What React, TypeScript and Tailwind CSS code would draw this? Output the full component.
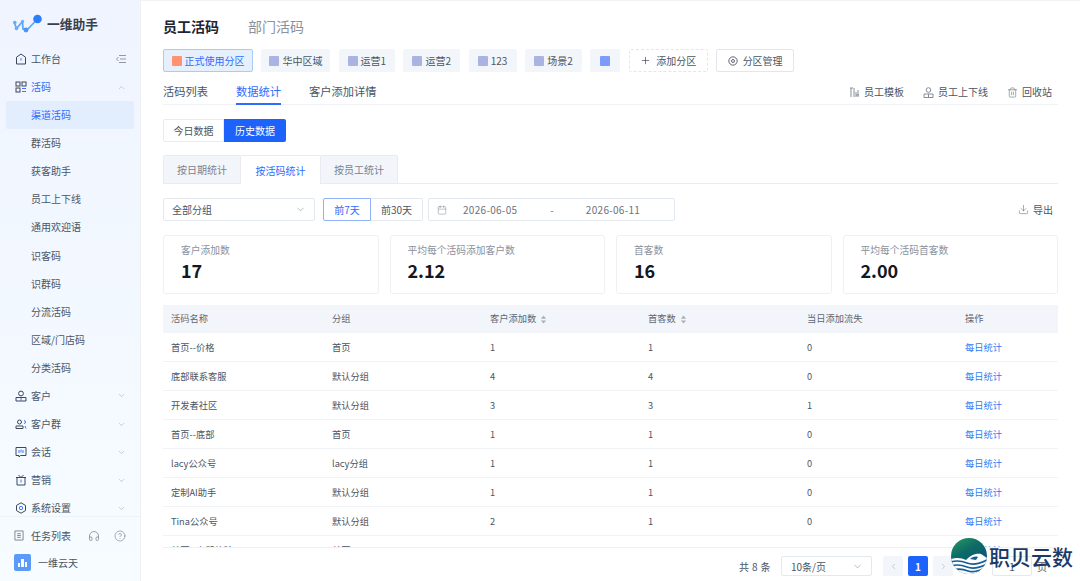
import { Calendar, ChevronDown, ChevronLeft, ChevronRight, ChevronUp, CircleHelp, Download, Headphones, Plus, Trash2 } from "lucide-react";

const menuTop = [
    { name: "客户", icon: "user" },
    { name: "客户群", icon: "users" },
    { name: "会话", icon: "chat" },
    { name: "营销", icon: "gift" },
    { name: "系统设置", icon: "gear" },
];

const subMenu = ["渠道活码", "群活码", "获客助手", "员工上下线", "通用欢迎语", "识客码", "识群码", "分流活码", "区域/门店码", "分类活码"];

const chips = [
    { name: "华中区域", w: "w-[69px]" },
    { name: "运营1", w: "w-[56px]" },
    { name: "运营2", w: "w-[57px]" },
    { name: "123", w: "w-[48px]" },
    { name: "场景2", w: "w-[57px]" },
];

const stats = [
    { label: "客户添加数", value: "17" },
    { label: "平均每个活码添加客户数", value: "2.12" },
    { label: "首客数", value: "16" },
    { label: "平均每个活码首客数", value: "2.00" },
];

const rows = [
    { name: "首页--价格", group: "首页", add: "1", first: "1", lost: "0" },
    { name: "底部联系客服", group: "默认分组", add: "4", first: "4", lost: "0" },
    { name: "开发者社区", group: "默认分组", add: "3", first: "3", lost: "1" },
    { name: "首页--底部", group: "首页", add: "1", first: "1", lost: "0" },
    { name: "lacy公众号", group: "lacy分组", add: "1", first: "1", lost: "0" },
    { name: "定制AI助手", group: "默认分组", add: "1", first: "1", lost: "0" },
    { name: "Tina公众号", group: "默认分组", add: "2", first: "1", lost: "0" },
    { name: "首页--立即体验", group: "首页", add: "1", first: "1", lost: "0" },
];

function MenuIcon({ type }: { type: string }) {
    const dark = "#3f4757";
    const blue = "#3b78ff";
    return (
        <svg viewBox="0 0 12 12" className="w-[12px] h-[12px] shrink-0" fill="none" stroke={dark} strokeWidth="1">
            {type === "home" && (<><path d="M1.500 4.200 6 1l4.500 3.200v6.800h-9z" /><path d="M6 5v2.600" stroke={blue} /></>)}
            {type === "grid" && (<><rect x="1" y="1" width="4" height="4" /><rect x="7" y="1" width="4" height="4" /><rect x="1" y="7" width="4" height="4" /><path d="M7 7.500h4M7 10.500h4" stroke={blue} /></>)}
            {type === "user" && (<><circle cx="6" cy="3.500" r="2.400" /><path d="M1 11V7.500h10V11z" /><path d="M6 8v3" stroke={blue} /></>)}
            {type === "users" && (<><circle cx="4.500" cy="4" r="2" /><path d="M1 10.500V8h7v2.500z" /><path d="M9 2.500a1.500 1.500 0 0 1 0 3M10 8l1 2.500" stroke={blue} /></>)}
            {type === "chat" && (<><path d="M1 1.500h10v8H5.500L4 11V9.500H1z" /><path d="M4 4v3M6 3.500v3M8 4v3" stroke={blue} /></>)}
            {type === "gift" && (<><path d="M1 3.500h10M2 3.500v7.500h8V3.500M3.500 1 6 3.500 8.500 1" /><path d="M6 5.500v3" stroke={blue} /></>)}
            {type === "gear" && (<><path d="m6 .8 4.500 2.600v5.200L6 11.200 1.500 8.600V3.400z" /><circle cx="6" cy="6" r="1.700" stroke={blue} /></>)}
        </svg>
    );
}

function Logo() {
    return (
        <svg viewBox="0 0 30 20" className="w-[30px] h-[20px]" fill="none" strokeLinecap="round">
            <path d="M1.500 9 3.500 14.500 9.500 7.500 10 15 14 16 24 5.500" stroke="#63a8f7" strokeWidth="1.800" />
            <circle cx="1.800" cy="8.500" r="1.800" fill="#5fb0f8" />
            <circle cx="3.500" cy="14.500" r="1.800" fill="#5fb0f8" />
            <circle cx="9.500" cy="7.500" r="1.600" fill="#5fb0f8" />
            <circle cx="13" cy="16" r="2.400" fill="#4a95f5" />
            <circle cx="24.500" cy="5" r="4.300" fill="#2d7ff9" />
        </svg>
    );
}

function SortIcon() {
    return (
        <svg viewBox="0 0 8 10" className="w-[7px] h-[9px]" fill="#a9b0bc">
            <path d="M4 .5 7 4H1zM4 9.500 1 6h6z" />
        </svg>
    );
}

function Watermark() {
    return (
        <div className="absolute left-[951px] top-[538px] flex items-center gap-[2px]">
            <svg viewBox="0 0 36 36" className="w-[36px] h-[36px]">
                <defs>
                    <linearGradient id="globe" x1="0" y1="0" x2="0.600" y2="1">
                        <stop offset="0" stopColor="#2a9a63" />
                        <stop offset="0.450" stopColor="#0d6a66" />
                        <stop offset="1" stopColor="#0a4f86" />
                    </linearGradient>
                    <clipPath id="ball">
                        <circle cx="18" cy="18" r="18" />
                    </clipPath>
                </defs>
                <circle cx="18" cy="18" r="18" fill="url(#globe)" />
                <g clipPath="url(#ball)">
                    <path d="M0 21c6-2 11-1 15 1 4-4 9-7 15-6l6 4v16H0z" fill="#fff" />
                    <path d="M0 24c6-2 11-1 16 1s12 1 20-3" stroke="#135f96" strokeWidth="1.700" fill="none" />
                    <path d="M0 28c6-2 11-1 16 1s12 1 20-3" stroke="#135f96" strokeWidth="1.700" fill="none" />
                    <path d="M3 32c5-2 9-1 14 1s10 0 15-2" stroke="#135f96" strokeWidth="1.700" fill="none" />
                    <path d="M19 21c2-2 5-3 8-2l-2 3z" fill="#135f96" />
                </g>
            </svg>
            <span className="text-[21px] leading-none font-medium text-[#1b3a68]">职贝云数</span>
        </div>
    );
}

export default function App() {
    return (
        <div className="relative w-[1080px] h-[581px] flex overflow-hidden bg-white text-[#4b5563] font-['Noto_Sans_CJK_SC','Noto_Sans',sans-serif]">

            {/* sidebar */}
            <aside className="w-[141px] shrink-0 h-full flex flex-col border-r border-[#eef0f4] bg-gradient-to-b from-[#eff4ff] to-[#f6fcff]">
                <div className="h-[45px] shrink-0 flex items-center pl-[13px] gap-[4px] pt-[2px]">
                    <Logo />
                    <span className="text-[12.750px] font-bold text-[#39404d]">一维助手</span>
                </div>

                <nav className="flex-1 overflow-hidden px-[6px] text-[10px] leading-[28px]">
                    <div className="h-[28px] flex items-center pl-[9px] pr-[8px] gap-[4px]">
                        <MenuIcon type="home" />
                        <span className="flex-1">工作台</span>
                        <svg viewBox="0 0 10 8" className="w-[10px] h-[8px]" fill="none" stroke="#7a828f" strokeWidth="0.800">
                            <path d="M3 .5h7M4 4h6M3 7.500h7M2.500 2 .5 4l2 2" />
                        </svg>
                    </div>
                    <div className="h-[28px] flex items-center pl-[9px] pr-[8px] gap-[4px] text-[#2e6bff]">
                        <MenuIcon type="grid" />
                        <span className="flex-1">活码</span>
                        <ChevronUp className="w-[9px] h-[9px] text-[#b7bcc6]" />
                    </div>
                    {subMenu.map((item, i) => (
                        <div key={item} className={`h-[28.100px] pl-[25px] flex items-center rounded-[2px] ${i === 0 ? "bg-[#e2eefe] text-[#2e6bff]" : ""}`}>
                            {item}
                        </div>
                    ))}
                    {menuTop.map((item) => (
                        <div key={item.name} className="h-[28.100px] flex items-center pl-[9px] pr-[8px] gap-[4px]">
                            <MenuIcon type={item.icon} />
                            <span className="flex-1">{item.name}</span>
                            <ChevronDown className="w-[9px] h-[9px] text-[#b7bcc6]" />
                        </div>
                    ))}
                </nav>

                <div className="h-[65px] shrink-0 border-t border-[#eef2f7] px-[14px] text-[10px]">
                    <div className="h-[37px] flex items-center gap-[6px]">
                        <svg viewBox="0 0 11 12" className="w-[10px] h-[11px]" fill="none" stroke="#6b7280" strokeWidth="0.900">
                            <path d="M1 1h9v10H1zM3.500 4h4M3.500 6h4M3.500 8h4" />
                        </svg>
                        <span className="flex-1 pl-[1px]">任务列表</span>
                        <Headphones className="w-[12px] h-[12px] text-[#7b8290] mr-[8px]" strokeWidth={1.500} />
                        <CircleHelp className="w-[12px] h-[12px] text-[#7b8290]" strokeWidth={1.300} />
                    </div>
                    <div className="flex items-center gap-[7px]">
                        <div className="w-[17px] h-[17px] rounded-[2px] bg-[#5b9af8] flex items-end justify-center gap-[1px] pb-[4px]">
                            <span className="w-[2px] h-[4px] bg-white" />
                            <span className="w-[3px] h-[8px] bg-white" />
                            <span className="w-[2px] h-[5px] bg-white" />
                        </div>
                        <span>一维云天</span>
                    </div>
                </div>
            </aside>

            {/* main */}
            <main className="flex-1 min-w-0 h-full flex flex-col border-t border-[#f1f2f4]">
                <div className="flex-1 overflow-hidden pl-[22px] pr-[22px] pt-[15px]">

                    <div className="flex items-center gap-[29px] h-[20px]">
                        <span className="text-[14px] font-bold text-[#1f2430]">员工活码</span>
                        <span className="text-[14px] text-[#8b919c]">部门活码</span>
                    </div>

                    <div className="flex items-center gap-[8.400px] mt-[13px] h-[23px] text-[10px]">
                        <div className="w-[90px] h-full flex items-center justify-center gap-[3px] rounded-[2px] border border-[#a9cbf8] bg-[#e6f0fd] text-[#2e6bff]">
                            <span className="w-[10px] h-[10px] rounded-[1px] bg-[#ff9270]" />
                            正式使用分区
                        </div>
                        {chips.map((c) => (
                            <div key={c.name} className={`${c.w} h-full flex items-center justify-center gap-[3px] rounded-[2px] bg-[#f2f5fa] text-[#4b5563]`}>
                                <span className="w-[10px] h-[10px] rounded-[1px] bg-[#a9b4e2]" />
                                {c.name}
                            </div>
                        ))}
                        <div className="w-[30px] h-full flex items-center justify-center rounded-[2px] bg-[#f2f5fa]">
                            <span className="w-[10px] h-[10px] rounded-[1px] bg-[#7d9bfb]" />
                        </div>
                        <div className="w-[79px] h-full flex items-center justify-center gap-[5px] rounded-[2px] border border-dashed border-[#e3e6eb]">
                            <Plus className="w-[11px] h-[11px] text-[#3f4757]" strokeWidth={1.500} />
                            添加分区
                        </div>
                        <div className="w-[78px] h-full flex items-center justify-center gap-[5px] rounded-[2px] border border-[#e3e6eb]">
                            <svg viewBox="0 0 12 12" className="w-[10px] h-[10px]" fill="none" stroke="#3f4757" strokeWidth="1">
                                <circle cx="6" cy="6" r="5" />
                                <circle cx="6" cy="6" r="1.800" />
                            </svg>
                            分区管理
                        </div>
                    </div>

                    <div className="flex items-end justify-between h-[22px] mt-[11px] border-b border-[#f1f2f5] text-[11.250px]">
                        <div className="flex gap-[28px] h-full">
                            <span>活码列表</span>
                            <span className="h-[22px] text-[#2e6bff] border-b-2 border-[#2e6bff]">数据统计</span>
                            <span>客户添加详情</span>
                        </div>
                        <div className="flex h-full pt-[1px] pr-[6px] gap-[19px] text-[10px]">
                            <span className="flex items-start gap-[4px]">
                                <svg viewBox="0 0 11 11" className="w-[11px] h-[11px] mt-[3px]" fill="none" stroke="#7b8290" strokeWidth="0.900">
                                    <path d="M1 1h3M2 1v9M5 1v9M7 5v5M9 3v7M7 8h3" />
                                </svg>
                                员工模板
                            </span>
                            <span className="flex items-start gap-[4px]">
                                <svg viewBox="0 0 11 11" className="w-[11px] h-[11px] mt-[3px]" fill="none" stroke="#7b8290" strokeWidth="0.900">
                                    <circle cx="5.500" cy="3" r="2.300" />
                                    <path d="M1 10.500V7h9v3.500zM5.500 7v3.500" />
                                </svg>
                                员工上下线
                            </span>
                            <span className="flex items-start gap-[4px]">
                                <Trash2 className="w-[11px] h-[11px] mt-[3px] text-[#7b8290]" strokeWidth={1.500} />
                                回收站
                            </span>
                        </div>
                    </div>

                    <div className="flex mt-[14px] h-[23px] text-[10px]">
                        <div className="w-[61px] flex items-center justify-center border border-[#e8ebf0] rounded-l-[2px]">今日数据</div>
                        <div className="w-[62px] flex items-center justify-center bg-[#1c62fb] text-white rounded-r-[2px]">历史数据</div>
                    </div>

                    <div className="flex mt-[13px] h-[29px] border-b border-[#e8ebf0] text-[10px]">
                        <div className="w-[78px] h-[29px] flex items-center justify-center bg-[#f2f5fa] border border-[#e8ebf0] rounded-t-[2px] text-[#7b8290]">按日期统计</div>
                        <div className="w-[79px] h-[29px] flex items-center justify-center bg-white border-t border-[#e8ebf0] text-[#2e6bff]">按活码统计</div>
                        <div className="w-[78px] h-[29px] flex items-center justify-center bg-[#f2f5fa] border border-[#e8ebf0] rounded-t-[2px] text-[#7b8290]">按员工统计</div>
                    </div>

                    <div className="flex items-center mt-[14px] h-[23px] text-[10px]">
                        <div className="w-[152px] h-full flex items-center justify-between pl-[8px] pr-[8px] border border-[#e4e8ef] rounded-[2px]">
                            <span>全部分组</span>
                            <ChevronDown className="w-[11px] h-[11px] text-[#8b919c]" strokeWidth={1.300} />
                        </div>
                        <div className="ml-[8px] w-[48px] h-full flex items-center justify-center border border-[#8fb2fb] rounded-l-[2px] text-[#2e6bff]">前7天</div>
                        <div className="w-[52px] h-full flex items-center justify-center border border-l-0 border-[#e4e8ef] rounded-r-[2px]">前30天</div>
                        <div className="ml-[5px] w-[247px] h-full flex items-center pl-[8px] border border-[#e4e8ef] rounded-[2px] text-[#6b7280]">
                            <Calendar className="w-[10px] h-[10px] text-[#8b919c]" strokeWidth={1.300} />
                            <span className="ml-[16px] tracking-[0.300px]">2026-06-05</span>
                            <span className="ml-[33px]">-</span>
                            <span className="ml-[32px] tracking-[0.300px]">2026-06-11</span>
                        </div>
                        <div className="ml-auto flex items-center gap-[4px] pr-[5px]">
                            <Download className="w-[11px] h-[11px] text-[#6b7280]" strokeWidth={1.300} />
                            导出
                        </div>
                    </div>

                    <div className="grid grid-cols-4 gap-[11px] mt-[14px]">
                        {stats.map((s) => (
                            <div key={s.label} className="h-[59px] border border-[#eef0f4] rounded-[3px] pl-[17px] pt-[7px]">
                                <div className="text-[9.750px] leading-[14px] text-[#8b919c]">{s.label}</div>
                                <div className="text-[18px] leading-[22px] mt-[2px] font-bold text-[#14171f]">{s.value}</div>
                            </div>
                        ))}
                    </div>

                    <div className="mt-[11px] text-[9.250px]">
                        <div className="grid grid-cols-[161px_158px_158px_159px_158px_100px] h-[28px] items-center bg-[#f2f5fa] text-[#5f6673]">
                            <span className="pl-[8px]">活码名称</span>
                            <span className="pl-[8px]">分组</span>
                            <span className="pl-[8px] flex items-center gap-[4px]">客户添加数 <SortIcon /></span>
                            <span className="pl-[8px] flex items-center gap-[4px]">首客数 <SortIcon /></span>
                            <span className="pl-[8px]">当日添加流失</span>
                            <span className="pl-[8px]">操作</span>
                        </div>
                        {rows.map((r) => (
                            <div key={r.name} className="grid grid-cols-[161px_158px_158px_159px_158px_100px] h-[29px] pt-[1px] items-center border-b border-[#f1f3f6] text-[#4b5563]">
                                <span className="pl-[8px]">{r.name}</span>
                                <span className="pl-[8px]">{r.group}</span>
                                <span className="pl-[8px]">{r.add}</span>
                                <span className="pl-[8px]">{r.first}</span>
                                <span className="pl-[8px]">{r.lost}</span>
                                <span className="pl-[8px] text-[#2e7bf6]">每日统计</span>
                            </div>
                        ))}
                    </div>
                </div>

                {/* pagination */}
                <div className="h-[34px] shrink-0 mx-[22px] border-t border-[#eef0f4] flex items-center justify-end text-[10px] pt-[3px]">
                    <span className="tracking-[0.400px]">共 8 条</span>
                    <div className="ml-[10px] w-[91px] h-[20px] flex items-center justify-between pl-[9px] pr-[8px] border border-[#e4e8ef] rounded-[2px]">
                        10条/页
                        <ChevronDown className="w-[11px] h-[11px] text-[#8b919c]" strokeWidth={1.300} />
                    </div>
                    <div className="ml-[11px] w-[20px] h-[20px] flex items-center justify-center rounded-[2px] bg-[#f2f5fa]">
                        <ChevronLeft className="w-[9px] h-[9px] text-[#b7bcc6]" />
                    </div>
                    <div className="ml-[5px] w-[20px] h-[20px] flex items-center justify-center rounded-[2px] bg-[#1c62fb] text-white font-bold">1</div>
                    <div className="ml-[5px] w-[20px] h-[20px] flex items-center justify-center rounded-[2px] bg-[#f2f5fa]">
                        <ChevronRight className="w-[9px] h-[9px] text-[#b7bcc6]" />
                    </div>
                    <span className="ml-[6px]">前往</span>
                    <div className="ml-[13px] w-[40px] h-[20px] flex items-center justify-center border border-[#e4e8ef] rounded-[2px]">1</div>
                    <span className="ml-[5px] mr-[11px]">页</span>
                </div>
            </main>

            <Watermark />
        </div>
    );
}
